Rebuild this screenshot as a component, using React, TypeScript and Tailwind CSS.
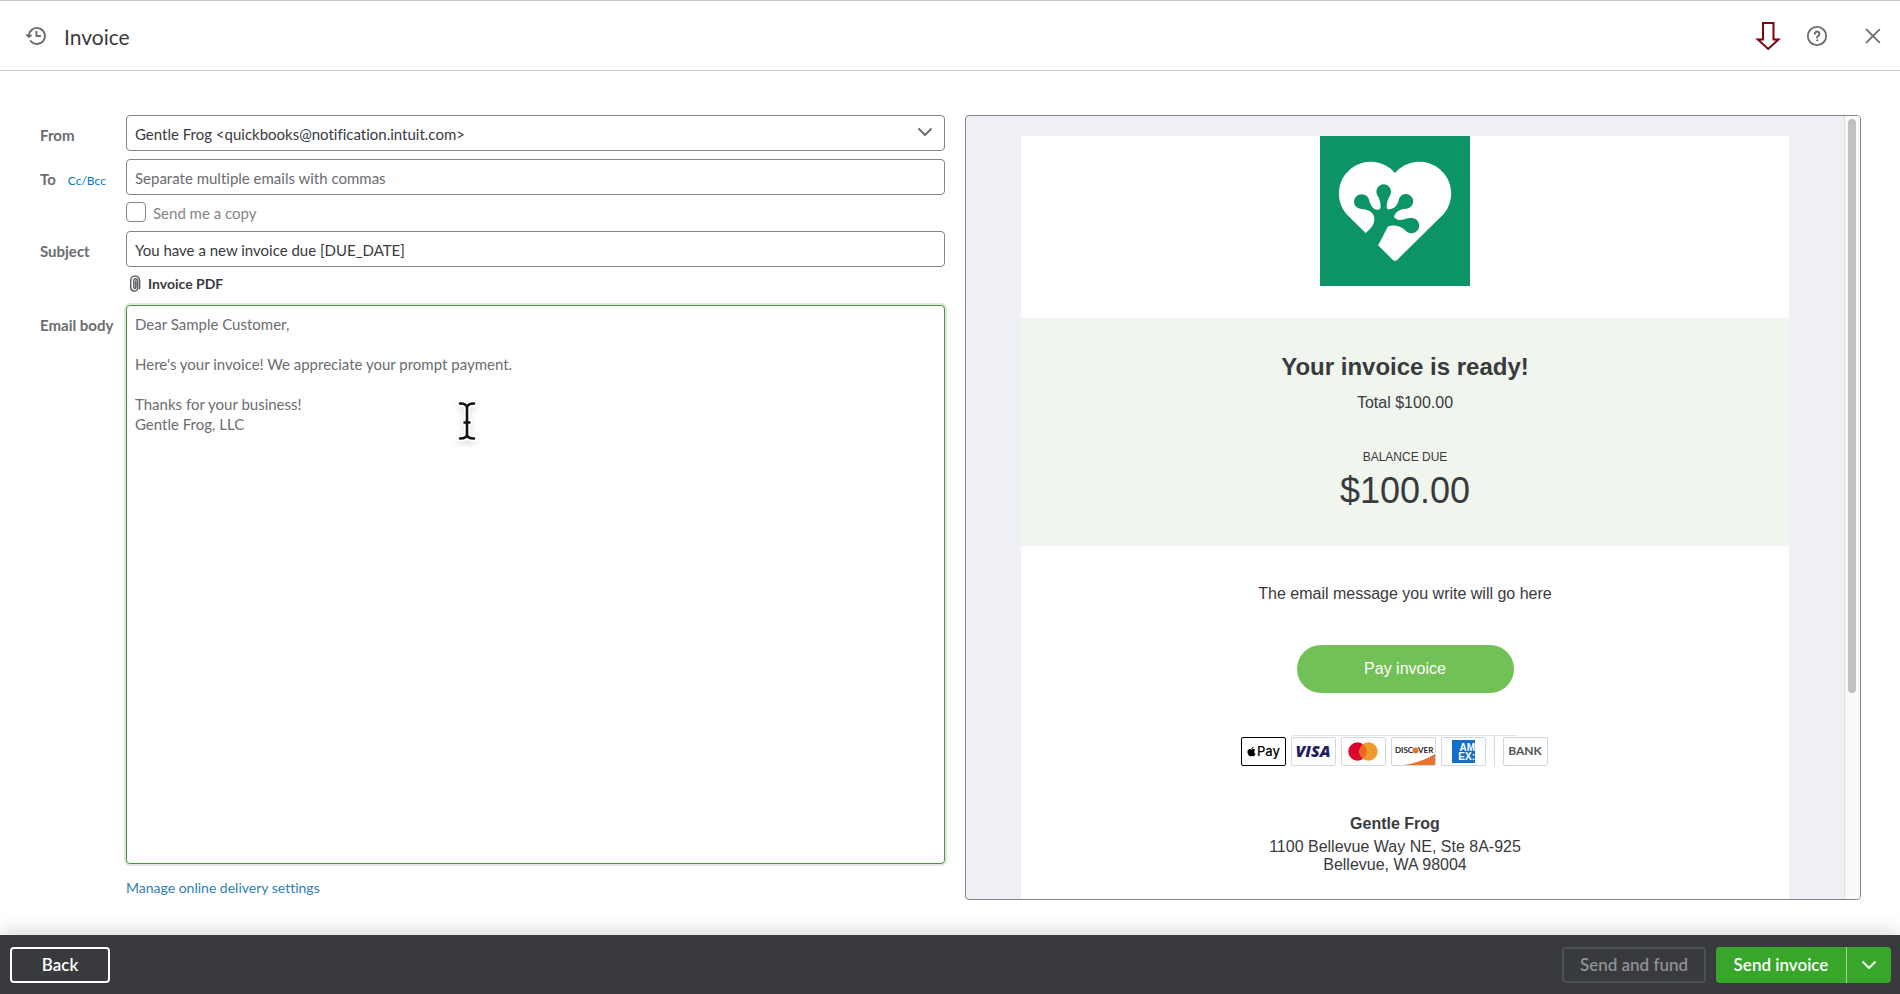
import React, { useState } from 'react';
import { FaApple } from 'react-icons/fa';

const HistoryIcon = () => (
  <svg viewBox="0 0 20 20" className="w-5 h-5" fill="none" stroke="#6b6c72" strokeWidth="1.9" strokeLinecap="round" strokeLinejoin="round">
    <path d="M2.9 9.8A8 8 0 1 1 4.7 15" />
    <path d="M1 9l1.9 1.9L4.9 9.4" />
    <path d="M10.4 5.6v4.4h3.8" />
  </svg>
);

const DownArrowIcon = () => (
  <svg viewBox="0 0 26 30" className="w-[26px] h-[30px]" fill="none" stroke="#7d0310" strokeWidth="2">
    <path d="M8 2h10.5v16.5h5L13.2 28 2.8 18.5H8z" />
  </svg>
);

const HelpIcon = () => (
  <svg viewBox="0 0 22 22" className="w-[22px] h-[22px]" fill="none" stroke="#6b6c72" strokeLinecap="round">
    <circle cx="11" cy="11" r="9.2" strokeWidth="1.8" />
    <path d="M8.8 8.8a2.3 2.3 0 1 1 3.5 2c-.9.5-1.2.8-1.2 1.6" strokeWidth="2" />
    <circle cx="11.1" cy="15.3" r="0.6" strokeWidth="1" fill="#6b6c72" />
  </svg>
);

const CloseIcon = () => (
  <svg viewBox="0 0 16 16" className="w-4 h-4" fill="none" stroke="#6b6c72" strokeWidth="1.8" strokeLinecap="round">
    <path d="M1.6 1.6l12.8 12.8M14.4 1.6L1.6 14.4" />
  </svg>
);

const ChevronIcon = ({ color }: { color: string }) => (
  <svg viewBox="0 0 16 10" className="w-4 h-[10px]" fill="none" stroke={color} strokeWidth="1.9" strokeLinecap="round" strokeLinejoin="round">
    <path d="M2 2l6 6 6-6" />
  </svg>
);

const PaperclipIcon = () => (
  <svg viewBox="0 0 12 18" className="w-3 h-[18px]" fill="none" stroke="#5f6066" strokeWidth="1.5" strokeLinecap="round">
    <path d="M8.6 14.2V5.6a1.9 1.9 0 0 0-3.8 0v7a1 1 0 0 0 2 0V6" />
    <path d="M10.6 13.6V5.4a4.3 4.3 0 0 0-8.9 0v7.2a3.8 3.8 0 0 0 6.9 1.8" />
  </svg>
);

const cursorPath = 'M5 4.5c4 0 7 1.2 7 4.5 0-3.3 3-4.5 7-4.5M12 8v28M5 39.5c4 0 7-1.2 7-4.5 0 3.3 3 4.5 7 4.5M9.5 23.5h5';

const TextCursor = () => (
  <svg viewBox="0 0 24 44" className="w-6 h-11 drop-shadow-md" fill="none" strokeLinecap="round">
    <path d={cursorPath} stroke="#fff" strokeWidth="6" />
    <path d={cursorPath} stroke="#111" strokeWidth="2.6" />
  </svg>
);

const FrogLogo = () => (
  <svg viewBox="120 78 450 450" className="w-[150px] h-[150px] shrink-0">
    <rect x="120" y="78" width="450" height="450" fill="#0c9468" />
    <path
      d="M345 189A95 95 0 1 0 199 312L338 449Q345 456 352 449L491 312A95 95 0 1 0 345 189Z"
      fill="#fff"
    />
    <path
      d="M257 369C274 355 283 343 283 327C283 306 264 299 244 297A22 22 0 1 1 244 253C258 253 266 262 268 272C272 287 280 297 290 299C299 300 302 296 302 288C302 275 296 262 291 254A22 22 0 1 1 331 254C326 264 320 275 320 288C320 297 323 299 329 298C346 295 353 284 356 270A22 22 0 1 1 379 296C362 296 345 305 342 321C352 333 364 331 375 327C384 324 388 324 394 324A23 23 0 1 1 378 363C366 350 345 343 327 348L323 351L295 405L270 420Z"
      fill="#0c9468"
    />
  </svg>
);

const card = 'flex items-center justify-center w-[45px] h-[29px] border rounded-xs bg-white overflow-hidden';

const PaymentMethods = () => (
  <div className="relative flex items-center gap-[5px]">
    <div className="absolute left-[52px] top-0 w-56 h-px bg-[#dfe1ea]" />
    <div className={`${card} border-black text-black`}>
      <FaApple className="w-[11px] h-[11px]" />
      <span className="font-['Inter',sans-serif] text-[13px] leading-4 font-medium">Pay</span>
    </div>
    <div className={`${card} border-[#d4d7e3]`}>
      <svg viewBox="0 0 43 27" className="w-[43px] h-[27px]">
        <text x="21" y="19" textAnchor="middle" fontFamily="Open Sans, sans-serif" fontSize="16" fontWeight="800" fontStyle="italic" fill="#1f1f5f">VISA</text>
      </svg>
    </div>
    <div className={`${card} border-[#d4d7e3]`}>
      <svg viewBox="0 0 43 27" className="w-[43px] h-[27px]">
        <circle cx="15.5" cy="13.5" r="9.2" fill="#d9082c" />
        <circle cx="26.5" cy="13.5" r="9.2" fill="#f09a30" />
        <path d="M21 6.2a9.2 9.2 0 0 1 0 14.6a9.2 9.2 0 0 1 0-14.6z" fill="#ee6620" />
      </svg>
    </div>
    <div className={`${card} border-[#d4d7e3]`}>
      <svg viewBox="0 0 43 27" className="w-[43px] h-[27px]">
        <path d="M12 27C25 25 35 21 43 16V27z" fill="#e7732f" />
        <text x="3" y="15" fontFamily="Lato, sans-serif" fontSize="8" fontWeight="700" fill="#222">DISC</text>
        <circle cx="23.5" cy="12.5" r="3" fill="#e7732f" />
        <text x="26" y="15" fontFamily="Lato, sans-serif" fontSize="8" fontWeight="700" fill="#222">VER</text>
      </svg>
    </div>
    <div className={`${card} border-[#d4d7e3]`}>
      <svg viewBox="0 0 43 27" className="w-[43px] h-[27px]">
        <rect x="10" y="2" width="23" height="23" fill="#1470c6" />
        <text x="33" y="13" textAnchor="end" fontFamily="Liberation Sans, sans-serif" fontSize="10" fontWeight="700" fill="#fff">AM</text>
        <text x="33" y="22" textAnchor="end" fontFamily="Liberation Sans, sans-serif" fontSize="10" fontWeight="700" fill="#fff">EX:</text>
      </svg>
    </div>
    <div className="flex items-center gap-2 pl-[3px]">
      <div className="w-px h-8 bg-[#d4d7e3]" />
      <div className={`${card} border-[#d4d7e3]`}>
        <span className="font-['Lato',sans-serif] text-xs font-bold text-[#555]">BANK</span>
      </div>
    </div>
  </div>
);

const labelClass = 'text-[15px] leading-5 font-bold text-[#6b6c72] whitespace-nowrap';
const fieldClass = 'w-full h-9 px-2 pt-0.5 border border-[#83848b] rounded-sm bg-white text-[15px] text-[#393a3d] outline-none';

const EmailForm = () => {
  const [subject, setSubject] = useState('You have a new invoice due [DUE_DATE]');
  const [to, setTo] = useState('');
  const [sendCopy, setSendCopy] = useState(false);
  const [body, setBody] = useState(
    "Dear Sample Customer,\n\nHere's your invoice! We appreciate your prompt payment.\n\nThanks for your business!\nGentle Frog, LLC"
  );

  return (
    <form className="grid grid-cols-[86px_minmax(0,1fr)] grid-rows-[auto_auto_auto_auto_auto_minmax(0,1fr)_auto] min-h-0">
      <label htmlFor="from" className={`${labelClass} pt-[10px]`}>From</label>
      <div className="relative">
        <select id="from" className={`${fieldClass} appearance-none`}>
          <option>Gentle Frog &lt;quickbooks@notification.intuit.com&gt;</option>
        </select>
        <span className="absolute right-3 top-3 pointer-events-none">
          <ChevronIcon color="#6b6c72" />
        </span>
      </div>

      <div className="flex items-baseline gap-3 mt-2 pt-[10px]">
        <label htmlFor="to" className={labelClass}>To</label>
        <a href="#cc" className="text-xs text-[#0077c5]">Cc/Bcc</a>
      </div>
      <input
        id="to"
        type="text"
        value={to}
        onChange={(e) => setTo(e.target.value)}
        placeholder="Separate multiple emails with commas"
        className={`${fieldClass} mt-2 placeholder:text-[#6b6c72]`}
      />

      <div className="col-start-2 flex items-center gap-[7px] mt-[7px] h-5">
        <input
          id="copy"
          type="checkbox"
          checked={sendCopy}
          onChange={(e) => setSendCopy(e.target.checked)}
          className="appearance-none w-5 h-5 border border-[#83848b] rounded-sm bg-white checked:bg-[#2ca01c]"
        />
        <label htmlFor="copy" className="pt-0.5 text-[15px] text-[#83848b]">Send me a copy</label>
      </div>

      <label htmlFor="subject" className={`${labelClass} mt-[9px] pt-[10px]`}>Subject</label>
      <input
        id="subject"
        type="text"
        value={subject}
        onChange={(e) => setSubject(e.target.value)}
        className={`${fieldClass} mt-[9px]`}
      />

      <div className="col-start-2 flex items-center gap-[7px] mt-[7px] h-5 pl-[3px]">
        <PaperclipIcon />
        <span className="text-sm font-bold text-[#393a3d]">Invoice PDF</span>
      </div>

      <label htmlFor="body" className={`${labelClass} mt-[11px] pt-[10px]`}>Email body</label>
      <div className="relative mt-[11px] min-h-0">
        <textarea
          id="body"
          value={body}
          onChange={(e) => setBody(e.target.value)}
          className="block w-full h-full px-2 py-2 border border-[#3f9c35] rounded-sm bg-white text-[15px] leading-5 text-[#6b6c72] resize-none outline-none ring-2 ring-[#e3e5e3]"
        />
        <span className="absolute left-[329px] top-[94px] pointer-events-none">
          <TextCursor />
        </span>
      </div>

      <a href="#delivery" className="col-start-2 justify-self-start mt-[14px] pb-0.5 text-sm text-[#2c7fb8]">
        Manage online delivery settings
      </a>
    </form>
  );
};

const EmailPreview = () => (
  <section className="flex min-h-0 border border-[#83848b] rounded-sm bg-[#eef0f6] overflow-hidden font-['Liberation_Sans',sans-serif] text-[#393a3d]">
    <div className="flex-1 flex justify-center pt-5 overflow-hidden">
      <article className="flex flex-col items-center w-full max-w-[768px] bg-white text-center">
        <div className="pr-5">
          <FrogLogo />
        </div>
        <div className="w-full h-[228px] shrink-0 mt-8 pt-[33px] bg-[#f0f5ee]">
          <h2 className="text-2xl font-bold">Your invoice is ready!</h2>
          <p className="mt-2 text-base">Total $100.00</p>
          <p className="mt-8 text-xs leading-5">BALANCE DUE</p>
          <p className="mt-1 text-4xl">$100.00</p>
        </div>
        <p className="mt-9 text-base">The email message you write will go here</p>
        <button type="button" className="shrink-0 w-[217px] h-12 mt-[39px] rounded-full bg-[#72c157] text-base text-white">
          Pay invoice
        </button>
        <div className="mt-[42px] pr-[22px]">
          <PaymentMethods />
        </div>
        <div className="mt-12 pr-5 text-base leading-[18px]">
          <h3 className="mb-[5px] font-bold">Gentle Frog</h3>
          <p>1100 Bellevue Way NE, Ste 8A-925</p>
          <p>Bellevue, WA 98004</p>
        </div>
      </article>
    </div>
    <div className="w-4 px-[3px] pt-[3px] border-l border-[#dedede] bg-[#fafafa]">
      <div className="w-2 h-[574px] rounded-full bg-[#c1c1c1]" />
    </div>
  </section>
);

export default function App() {
  return (
    <div className="flex flex-col h-screen bg-white font-['Lato',sans-serif] [font-variant-ligatures:none]">
      {/* Header */}
      <header className="flex items-center justify-between h-[71px] shrink-0 pl-[26px] pr-[19px] border-y border-[#c7c8cc]">
        <div className="flex items-center gap-[18px]">
          <button type="button" aria-label="History"><HistoryIcon /></button>
          <h1 className="pt-0.5 text-[21px] text-[#393a3d]">Invoice</h1>
        </div>
        <div className="flex items-center">
          <button type="button" aria-label="Download"><DownArrowIcon /></button>
          <button type="button" aria-label="Help" className="ml-[25px]"><HelpIcon /></button>
          <button type="button" aria-label="Close" className="ml-[37px]"><CloseIcon /></button>
        </div>
      </header>

      {/* Form and preview */}
      <main className="grid grid-cols-[905fr_896fr] grid-rows-[minmax(0,1fr)] gap-5 flex-1 min-h-0 pt-11 pb-[35px] pl-10 pr-[39px]">
        <EmailForm />
        <EmailPreview />
      </main>

      {/* Footer */}
      <footer className="flex items-center justify-between h-[59px] shrink-0 pl-[10px] pr-[9px] bg-[#393a3d] text-[17px] shadow-[0_-4px_20px_rgba(0,0,0,0.15)]">
        <button type="button" className="w-[100px] h-9 border-2 border-white rounded-sm font-semibold text-white">Back</button>
        <div className="flex gap-[10px]">
          <button type="button" className="w-36 h-9 border-2 border-[#4d4f56] rounded-sm font-semibold text-[#8d9096]">Send and fund</button>
          <div className="flex rounded-sm bg-[#37a62a] overflow-hidden">
            <button type="button" className="w-[130px] h-9 font-semibold text-white">Send invoice</button>
            <button type="button" aria-label="More send options" className="flex items-center justify-center w-[45px] h-9 border-l border-[#9bd393]">
              <ChevronIcon color="#fff" />
            </button>
          </div>
        </div>
      </footer>
    </div>
  );
}
